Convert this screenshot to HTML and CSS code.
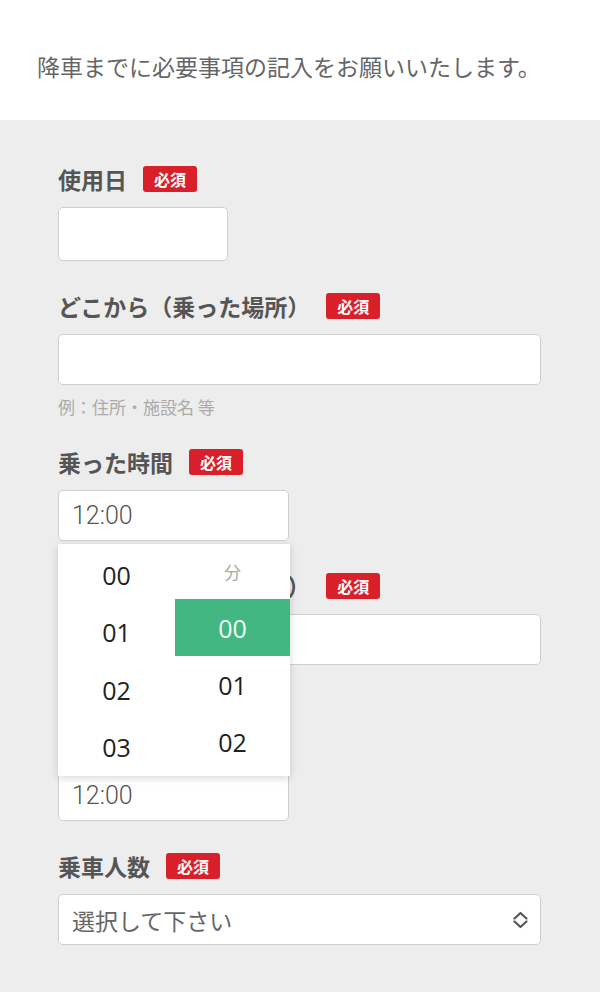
FILE: index.html
```html
<!DOCTYPE html>
<html lang="ja">
<head>
<meta charset="utf-8">
<title>乗車記録</title>
<link rel="stylesheet" href="styles.css">
</head>
<body>
<header class="intro">降車までに必要事項の記入をお願いいたします。</header>
<main class="form">
  <div class="field">
    <div class="label">使用日<span class="badge">必須</span></div>
    <div class="input input--short input--date"></div>
  </div>
  <div class="field">
    <div class="label">どこから（乗った場所）<span class="badge">必須</span></div>
    <div class="input"></div>
    <div class="hint">例：住所・施設名 等</div>
  </div>
  <div class="field">
    <div class="label">乗った時間<span class="badge">必須</span></div>
    <div class="time-wrap">
      <div class="input input--time">12:00</div>
      <div class="picker">
        <div class="picker-col picker-col--hours">
          <div class="picker-item">00</div>
          <div class="picker-item">01</div>
          <div class="picker-item">02</div>
          <div class="picker-item">03</div>
        </div>
        <div class="picker-col picker-col--mins">
          <div class="picker-head">分</div>
          <div class="picker-item picker-item--min is-selected">00</div>
          <div class="picker-item picker-item--min">01</div>
          <div class="picker-item picker-item--min">02</div>
        </div>
      </div>
    </div>
  </div>
  <div class="field">
    <div class="label">どこまで（降りた場所）<span class="badge">必須</span></div>
    <div class="input"></div>
    <div class="hint">例：住所・施設名 等</div>
  </div>
  <div class="field">
    <div class="label">降りた時間<span class="badge">必須</span></div>
    <div class="input input--time">12:00</div>
  </div>
  <div class="field">
    <div class="label">乗車人数<span class="badge">必須</span></div>
    <div class="input select">
      <span>選択して下さい</span>
      <svg class="select-icon" width="17" height="18" viewBox="0 0 17 18" fill="none" stroke="#555" stroke-width="2.2" stroke-linecap="round" stroke-linejoin="round"><path d="M2.5 7.5 L8.5 2 L14.5 7.5"/><path d="M2.5 10.5 L8.5 16 L14.5 10.5"/></svg>
    </div>
  </div>
</main>
</body>
</html>
```

FILE: styles.css
```css
* { box-sizing: border-box; }
html, body { margin: 0; padding: 0; }
body {
  font-family: "Noto Sans CJK JP", "Noto Sans", sans-serif;
  background: #ededed;
  color: #555;
}
.intro {
  background: #fff;
  height: 120px;
  padding: 48px 0 0 37px;
  font-size: 23px;
  line-height: 36px;
  color: #666;
}
.form {
  background: #ededed;
  min-height: calc(100vh - 120px);
  padding: 46px 59px 40px 58px;
  display: flex;
  flex-direction: column;
  gap: 32px;
}
.label {
  display: flex;
  align-items: center;
  height: 26px;
  margin-bottom: 15px;
  font-size: 23px;
  font-weight: 700;
  color: #555;
}
.badge {
  display: inline-block;
  margin-left: 16px;
  height: 26px;
  padding: 0 11px;
  background: #d91f29;
  color: #fff;
  font-size: 16px;
  font-weight: 700;
  line-height: 26px;
  border-radius: 3px;
}
.input {
  background: #fff;
  border: 1px solid #cfcfcf;
  border-radius: 5px;
  height: 51px;
  width: 100%;
}
.input--short { width: 170px; }
.input--date { height: 54px; }
.input--time {
  width: 231px;
  padding-left: 13px;
  display: flex;
  align-items: center;
  font-family: "Roboto", sans-serif;
  font-weight: 300;
  font-size: 25px;
  color: #555;
}
.hint {
  margin-top: 12px;
  line-height: 20px;
  font-size: 17px;
  color: #aaa;
}
.time-wrap { position: relative; }
.picker {
  position: absolute;
  top: calc(100% + 3px);
  left: 0;
  width: 232px;
  height: 232px;
  background: #fff;
  box-shadow: 0 2px 8px rgba(0, 0, 0, 0.16);
  display: flex;
  overflow: hidden;
  z-index: 2;
}
.picker-col { display: flex; flex-direction: column; }
.picker-col--hours { width: 117px; padding-top: 2px; }
.picker-col--mins { width: 115px; }
.picker-item {
  height: 57.5px;
  display: flex;
  align-items: center;
  justify-content: center;
  font-family: "Open Sans", sans-serif;
  font-size: 25px;
  color: #222;
}
.picker-item--min { height: 57px; }
.picker-head {
  height: 55px;
  display: flex;
  align-items: center;
  justify-content: center;
  font-size: 17px;
  color: #aaa;
}
.is-selected {
  background: #43b782;
  color: #effff6;
}
.select {
  display: flex;
  align-items: center;
  justify-content: space-between;
  padding: 0 11px 0 13px;
  font-size: 23px;
  color: #666;
}
.select-icon { display: block; }
```
